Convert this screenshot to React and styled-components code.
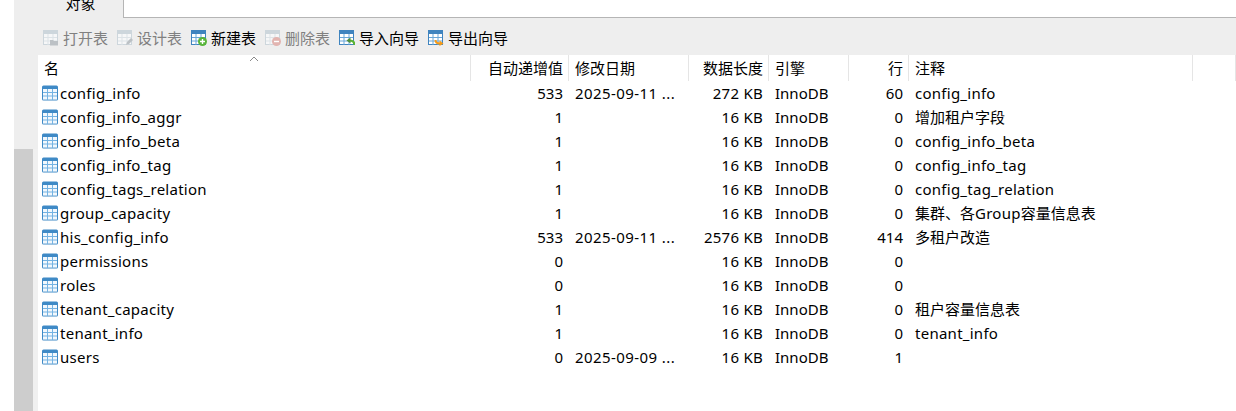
import React from "react";
import styled, { createGlobalStyle } from "styled-components";

const Global = createGlobalStyle`
  html, body {
    margin: 0;
    padding: 0;
    background: #fff;
  }
  body {
    font-family: "Noto Sans", "Noto Sans CJK SC", sans-serif;
    font-size: 15px;
    color: #000;
  }
`;

const Page = styled.div`
  display: flex;
  height: 411px;
  overflow: hidden;
  padding-left: 14px;
`;
const Rail = styled.div`
  width: 24px;
  flex: none;
  background: #eeeeee;
  padding-top: 149px;
  box-sizing: border-box;
`;
const Thumb = styled.div`
  height: 100%;
  background: linear-gradient(to right, #cdcdcd 19px, #f0f0f0 19px);
`;
const Main = styled.div`
  flex: 1;
  min-width: 0;
  display: flex;
  flex-direction: column;
`;
const TabBar = styled.div`
  display: flex;
  height: 18px;
  flex: none;
`;
const Tab = styled.div`
  width: 85px;
  background: #eeeeee;
  border-right: 1px solid #b5b5b5;
  overflow: hidden;
  display: flex;
  justify-content: center;
  align-items: flex-end;
  padding-bottom: 4px;
  box-sizing: content-box;
  height: 14px;
  line-height: 22px;
`;
const TabRest = styled.div`
  flex: 1;
  border-bottom: 1px solid #b5b5b5;
`;
const Toolbar = styled.div`
  height: 37px;
  flex: none;
  background: #eeeeee;
  display: flex;
  align-items: center;
  gap: 9px;
  padding: 3px 0 0 5px;
  box-sizing: border-box;
`;
const ToolButton = styled.div`
  display: flex;
  align-items: center;
  gap: 4px;
  line-height: 20px;
  color: ${(p) => (p.$off ? "#808080" : "#000")};
`;
const Columns = styled.div`
  display: grid;
  grid-template-columns: 433px 98px 120px 80px 80px 60px 284px 1fr;
`;
const Header = styled(Columns)`
  position: relative;
  height: 26px;
  flex: none;
`;
const HeadCell = styled.div`
  border-right: 1px solid #e5e5e5;
  padding: 0 5px 0 6px;
  line-height: 26px;
  text-align: ${(p) => (p.$right ? "right" : "left")};
  &:last-child {
    border-right: 0;
  }
`;
const SortMark = styled.svg`
  position: absolute;
  left: 211px;
  top: 0;
`;
const Row = styled(Columns)`
  height: 24px;
  line-height: 24px;
`;
const Cell = styled.div`
  padding: 0 6px 0 6px;
  white-space: nowrap;
  text-align: ${(p) => (p.$right ? "right" : "left")};
`;
const DateCell = styled(Cell)`
  letter-spacing: 0.42px;
`;
const NameCell = styled.div`
  display: flex;
  align-items: center;
  gap: 2px;
  padding-left: 4px;
  letter-spacing: 0.26px;
`;
const Latin = styled.span`
  letter-spacing: 0.26px;
`;

const TableIcon = () => (
  <svg width="16" height="16" viewBox="0 0 16 16">
    <rect x="0" y="0.5" width="16" height="15" rx="1.5" fill="#3f8ac6" />
    <path d="M1 4h14v10.6H1z" fill="#f2f8fd" />
    <path d="M5.5 4v11M10.5 4v11M1 7.5h14M1 11h14" stroke="#74b3e3" strokeWidth="1" fill="none" />
  </svg>
);

// toolbar icon: small table with a badge in the lower right corner
const ToolIcon = ({ kind, off }) => {
  const head = off ? "#cdd6dc" : "#3f84bf";
  const line = off ? "#dde3e7" : "#6aa7d8";
  return (
    <svg width="16" height="16" viewBox="0 0 16 16">
      <rect x="0.5" y="0.5" width="14" height="14" fill={off ? "#f6f7f8" : "#fff"} stroke={head} strokeWidth="1" />
      <rect x="0" y="0" width="15" height="4" fill={head} />
      <path d="M5 4v11M10 4v11M1 7.5h13M1 11h13" stroke={line} strokeWidth="1" fill="none" />
      {kind === "open" && (
        <path d="M7 10h3l1 1h4v4.5H7z" fill="#bcc1c5" />
      )}
      {kind === "design" && (
        <path d="M9 15l1-3 4-4 2 2-4 4z" fill="#bcc1c5" />
      )}
      {kind === "new" && (
        <g>
          <circle cx="11.5" cy="11.5" r="4.5" fill="#59b53a" />
          <path d="M11.5 9v5M9 11.5h5" stroke="#fff" strokeWidth="1.4" />
        </g>
      )}
      {kind === "remove" && (
        <g>
          <circle cx="11.5" cy="11.5" r="4.5" fill="#e2b4b0" />
          <path d="M9 11.5h5" stroke="#fff" strokeWidth="1.4" />
        </g>
      )}
      {kind === "import" && (
        <g fill="none">
          <path d="M15.5 15c0-3-1.5-4.5-5-4.5" stroke="#5cb531" strokeWidth="2" />
          <path d="M11.5 7.5l-4 3 4 3z" fill="#4d8f3a" />
        </g>
      )}
      {kind === "export" && (
        <g fill="none">
          <path d="M7.5 10c0 2.5 2 3.5 4.5 3.5" stroke="#f59a16" strokeWidth="2" />
          <path d="M11.5 10.5l4 3-4 2.5z" fill="#f59a16" />
        </g>
      )}
    </svg>
  );
};

// latin runs are a bit tighter in Noto Sans than in the screenshot, so they get some spacing
const Mixed = ({ text }) =>
  text.split(/([\x00-\x7f]+)/).map((part, i) =>
    i % 2 ? <Latin key={i}>{part}</Latin> : part
  );

const tools = [
  { kind: "open", label: "打开表", off: true },
  { kind: "design", label: "设计表", off: true },
  { kind: "new", label: "新建表" },
  { kind: "remove", label: "删除表", off: true },
  { kind: "import", label: "导入向导" },
  { kind: "export", label: "导出向导" },
];

const rows = [
  ["config_info", "533", "2025-09-11 ...", "272 KB", "60", "config_info"],
  ["config_info_aggr", "1", "", "16 KB", "0", "增加租户字段"],
  ["config_info_beta", "1", "", "16 KB", "0", "config_info_beta"],
  ["config_info_tag", "1", "", "16 KB", "0", "config_info_tag"],
  ["config_tags_relation", "1", "", "16 KB", "0", "config_tag_relation"],
  ["group_capacity", "1", "", "16 KB", "0", "集群、各Group容量信息表"],
  ["his_config_info", "533", "2025-09-11 ...", "2576 KB", "414", "多租户改造"],
  ["permissions", "0", "", "16 KB", "0", ""],
  ["roles", "0", "", "16 KB", "0", ""],
  ["tenant_capacity", "1", "", "16 KB", "0", "租户容量信息表"],
  ["tenant_info", "1", "", "16 KB", "0", "tenant_info"],
  ["users", "0", "2025-09-09 ...", "16 KB", "1", ""],
];

export default function App() {
  return (
    <>
      <Global />
      <Page>
        <Rail>
          <Thumb />
        </Rail>
        <Main>
          <TabBar>
            <Tab>对象</Tab>
            <TabRest />
          </TabBar>
          <Toolbar>
            {tools.map((t) => (
              <ToolButton key={t.kind} $off={t.off}>
                <ToolIcon kind={t.kind} off={t.off} />
                {t.label}
              </ToolButton>
            ))}
          </Toolbar>
          <Header>
            <HeadCell>名</HeadCell>
            <HeadCell $right>自动递增值</HeadCell>
            <HeadCell>修改日期</HeadCell>
            <HeadCell $right>数据长度</HeadCell>
            <HeadCell>引擎</HeadCell>
            <HeadCell $right>行</HeadCell>
            <HeadCell>注释</HeadCell>
            <HeadCell />
            <SortMark width="10" height="8" viewBox="0 0 10 8">
              <path d="M1 6l4-4 4 4" fill="none" stroke="#8a8a8a" strokeWidth="1" />
            </SortMark>
          </Header>
          {rows.map((r) => (
            <Row key={r[0]}>
              <NameCell>
                <TableIcon />
                {r[0]}
              </NameCell>
              <Cell $right>{r[1]}</Cell>
              <DateCell>{r[2]}</DateCell>
              <Cell $right><Latin>{r[3]}</Latin></Cell>
              <Cell>InnoDB</Cell>
              <Cell $right>{r[4]}</Cell>
              <Cell><Mixed text={r[5]} /></Cell>
            </Row>
          ))}
        </Main>
      </Page>
    </>
  );
}
